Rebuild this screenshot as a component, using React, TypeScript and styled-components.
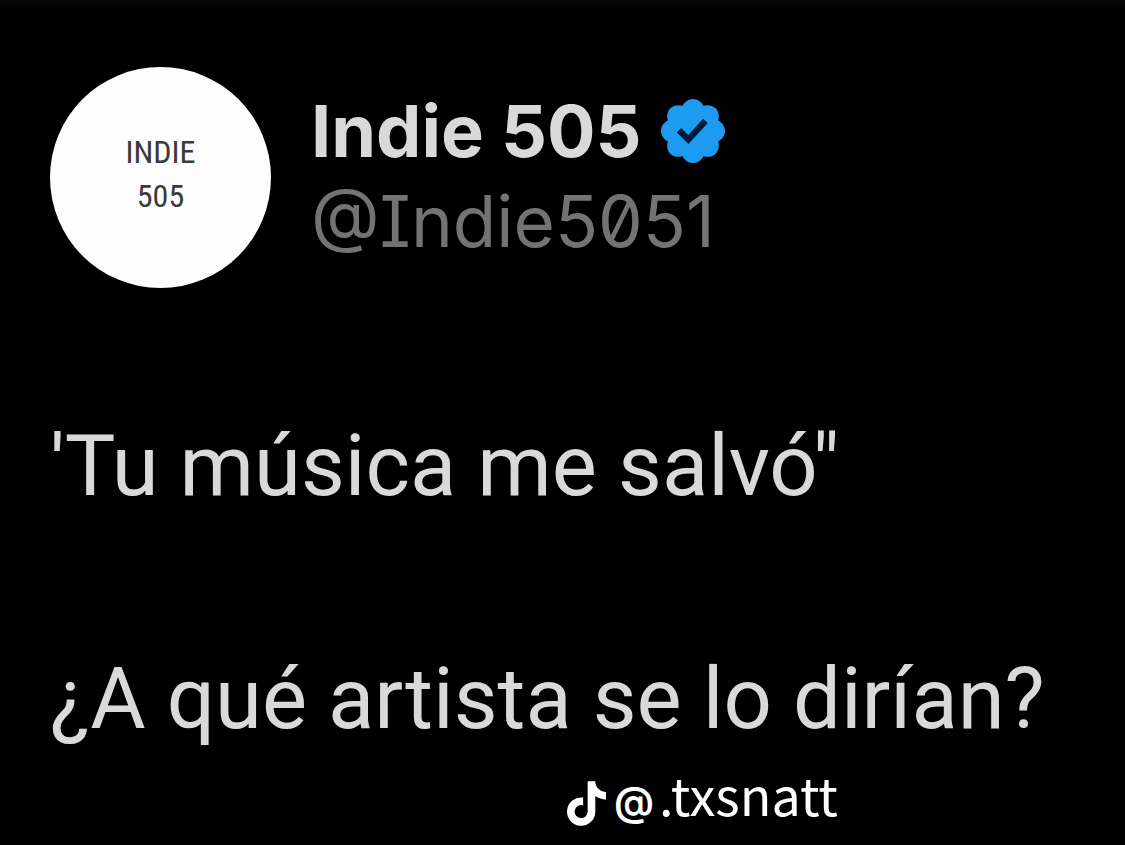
import React from "react";
import styled, { createGlobalStyle } from "styled-components";
import { FaTiktok } from "react-icons/fa";

const GlobalStyle = createGlobalStyle`
  *, *::before, *::after { box-sizing: border-box; }
  html, body { margin: 0; background: #000; }
  body { font-family: Inter, "Liberation Sans", sans-serif; color: #d9d9d9; }
`;

const Post = styled.article`
  min-height: 100vh;
  padding: 67px 50px 20px;
  background: linear-gradient(#060606, #000 10px);
`;

const Header = styled.header`
  display: flex;
  align-items: center;
  gap: 40px;
`;

const Avatar = styled.div`
  flex: none;
  display: flex;
  flex-direction: column;
  align-items: center;
  justify-content: center;
  width: 221px;
  height: 221px;
  padding-bottom: 8px;
  border-radius: 50%;
  background: #fdfdfd;
  color: #3a3a3a;
  font-family: "Roboto Condensed", Roboto, sans-serif;
  font-size: 32px;
  font-weight: 400;
  line-height: 44px;
`;

const Author = styled.div`
  padding-bottom: 4px;
`;

const NameRow = styled.div`
  display: flex;
  align-items: center;
  gap: 20px;
`;

const Name = styled.h1`
  margin: 0;
  font-size: 72px;
  line-height: 90px;
  font-weight: 700;
`;

const Badge = styled.svg`
  flex: none;
  width: 64px;
  height: 64px;
`;

const Handle = styled.p`
  margin: 0;
  color: #737373;
  font-size: 71px;
  line-height: 90px;
  font-feature-settings: "zero" 1, "cv08" 1;
`;

const Body = styled.div`
  display: flex;
  flex-direction: column;
  gap: 117px;
  margin-top: 120px;
  font-family: Roboto, "Liberation Sans", sans-serif;
`;

const Line = styled.p`
  margin: 0;
  font-size: 85px;
  line-height: 116px;
`;

const Watermark = styled.footer`
  display: flex;
  align-items: center;
  margin-top: 4px;
  padding-left: 517px;
  color: #fff;
`;

const TikTokLogo = styled(FaTiktok)`
  flex: none;
  width: 39px;
  height: 45px;
  margin-top: 20px;
`;

const AtMark = styled.span`
  margin-top: 16px;
  margin-left: 8px;
  font-size: 40px;
  line-height: 40px;
  font-weight: 600;
`;

const User = styled.span`
  margin-left: 5px;
  font-family: "Noto Sans CJK SC", sans-serif;
  font-size: 52px;
  line-height: 56px;
`;

export default function App() {
  return (
    <>
      <GlobalStyle />
      <Post>
        <Header>
          <Avatar>
            <span>INDIE</span>
            <span>505</span>
          </Avatar>
          <Author>
            <NameRow>
              <Name>Indie 505</Name>
              <Badge viewBox="1.75 1.75 20.5 20.5" role="img" aria-label="Verified">
                <path fill="#001a3a" d="M6 7h12v10H6z" />
                <path
                  fill="#1d9bf0"
                  d="M22.25 12c0-1.43-.88-2.67-2.19-3.34.46-1.39.2-2.9-.81-3.91s-2.52-1.27-3.91-.81c-.66-1.31-1.91-2.19-3.34-2.19s-2.67.88-3.33 2.19c-1.4-.46-2.91-.2-3.92.81s-1.26 2.52-.8 3.91c-1.31.67-2.2 1.91-2.2 3.34s.89 2.67 2.2 3.34c-.46 1.39-.21 2.9.8 3.91s2.52 1.26 3.91.81c.67 1.31 1.91 2.19 3.34 2.19s2.68-.88 3.34-2.19c1.39.45 2.9.2 3.91-.81s1.27-2.52.81-3.91c1.31-.67 2.19-1.91 2.19-3.34zm-11.71 4.2L6.8 12.46l1.41-1.42 2.26 2.26 4.8-5.23 1.47 1.36-6.2 6.77z"
                />
              </Badge>
            </NameRow>
            <Handle>@Indie5051</Handle>
          </Author>
        </Header>
        <Body>
          <Line>'Tu música me salvó"</Line>
          <Line>¿A qué artista se lo dirían?</Line>
        </Body>
        <Watermark>
          <TikTokLogo aria-label="TikTok" />
          <AtMark>@</AtMark>
          <User>.txsnatt</User>
        </Watermark>
      </Post>
    </>
  );
}
